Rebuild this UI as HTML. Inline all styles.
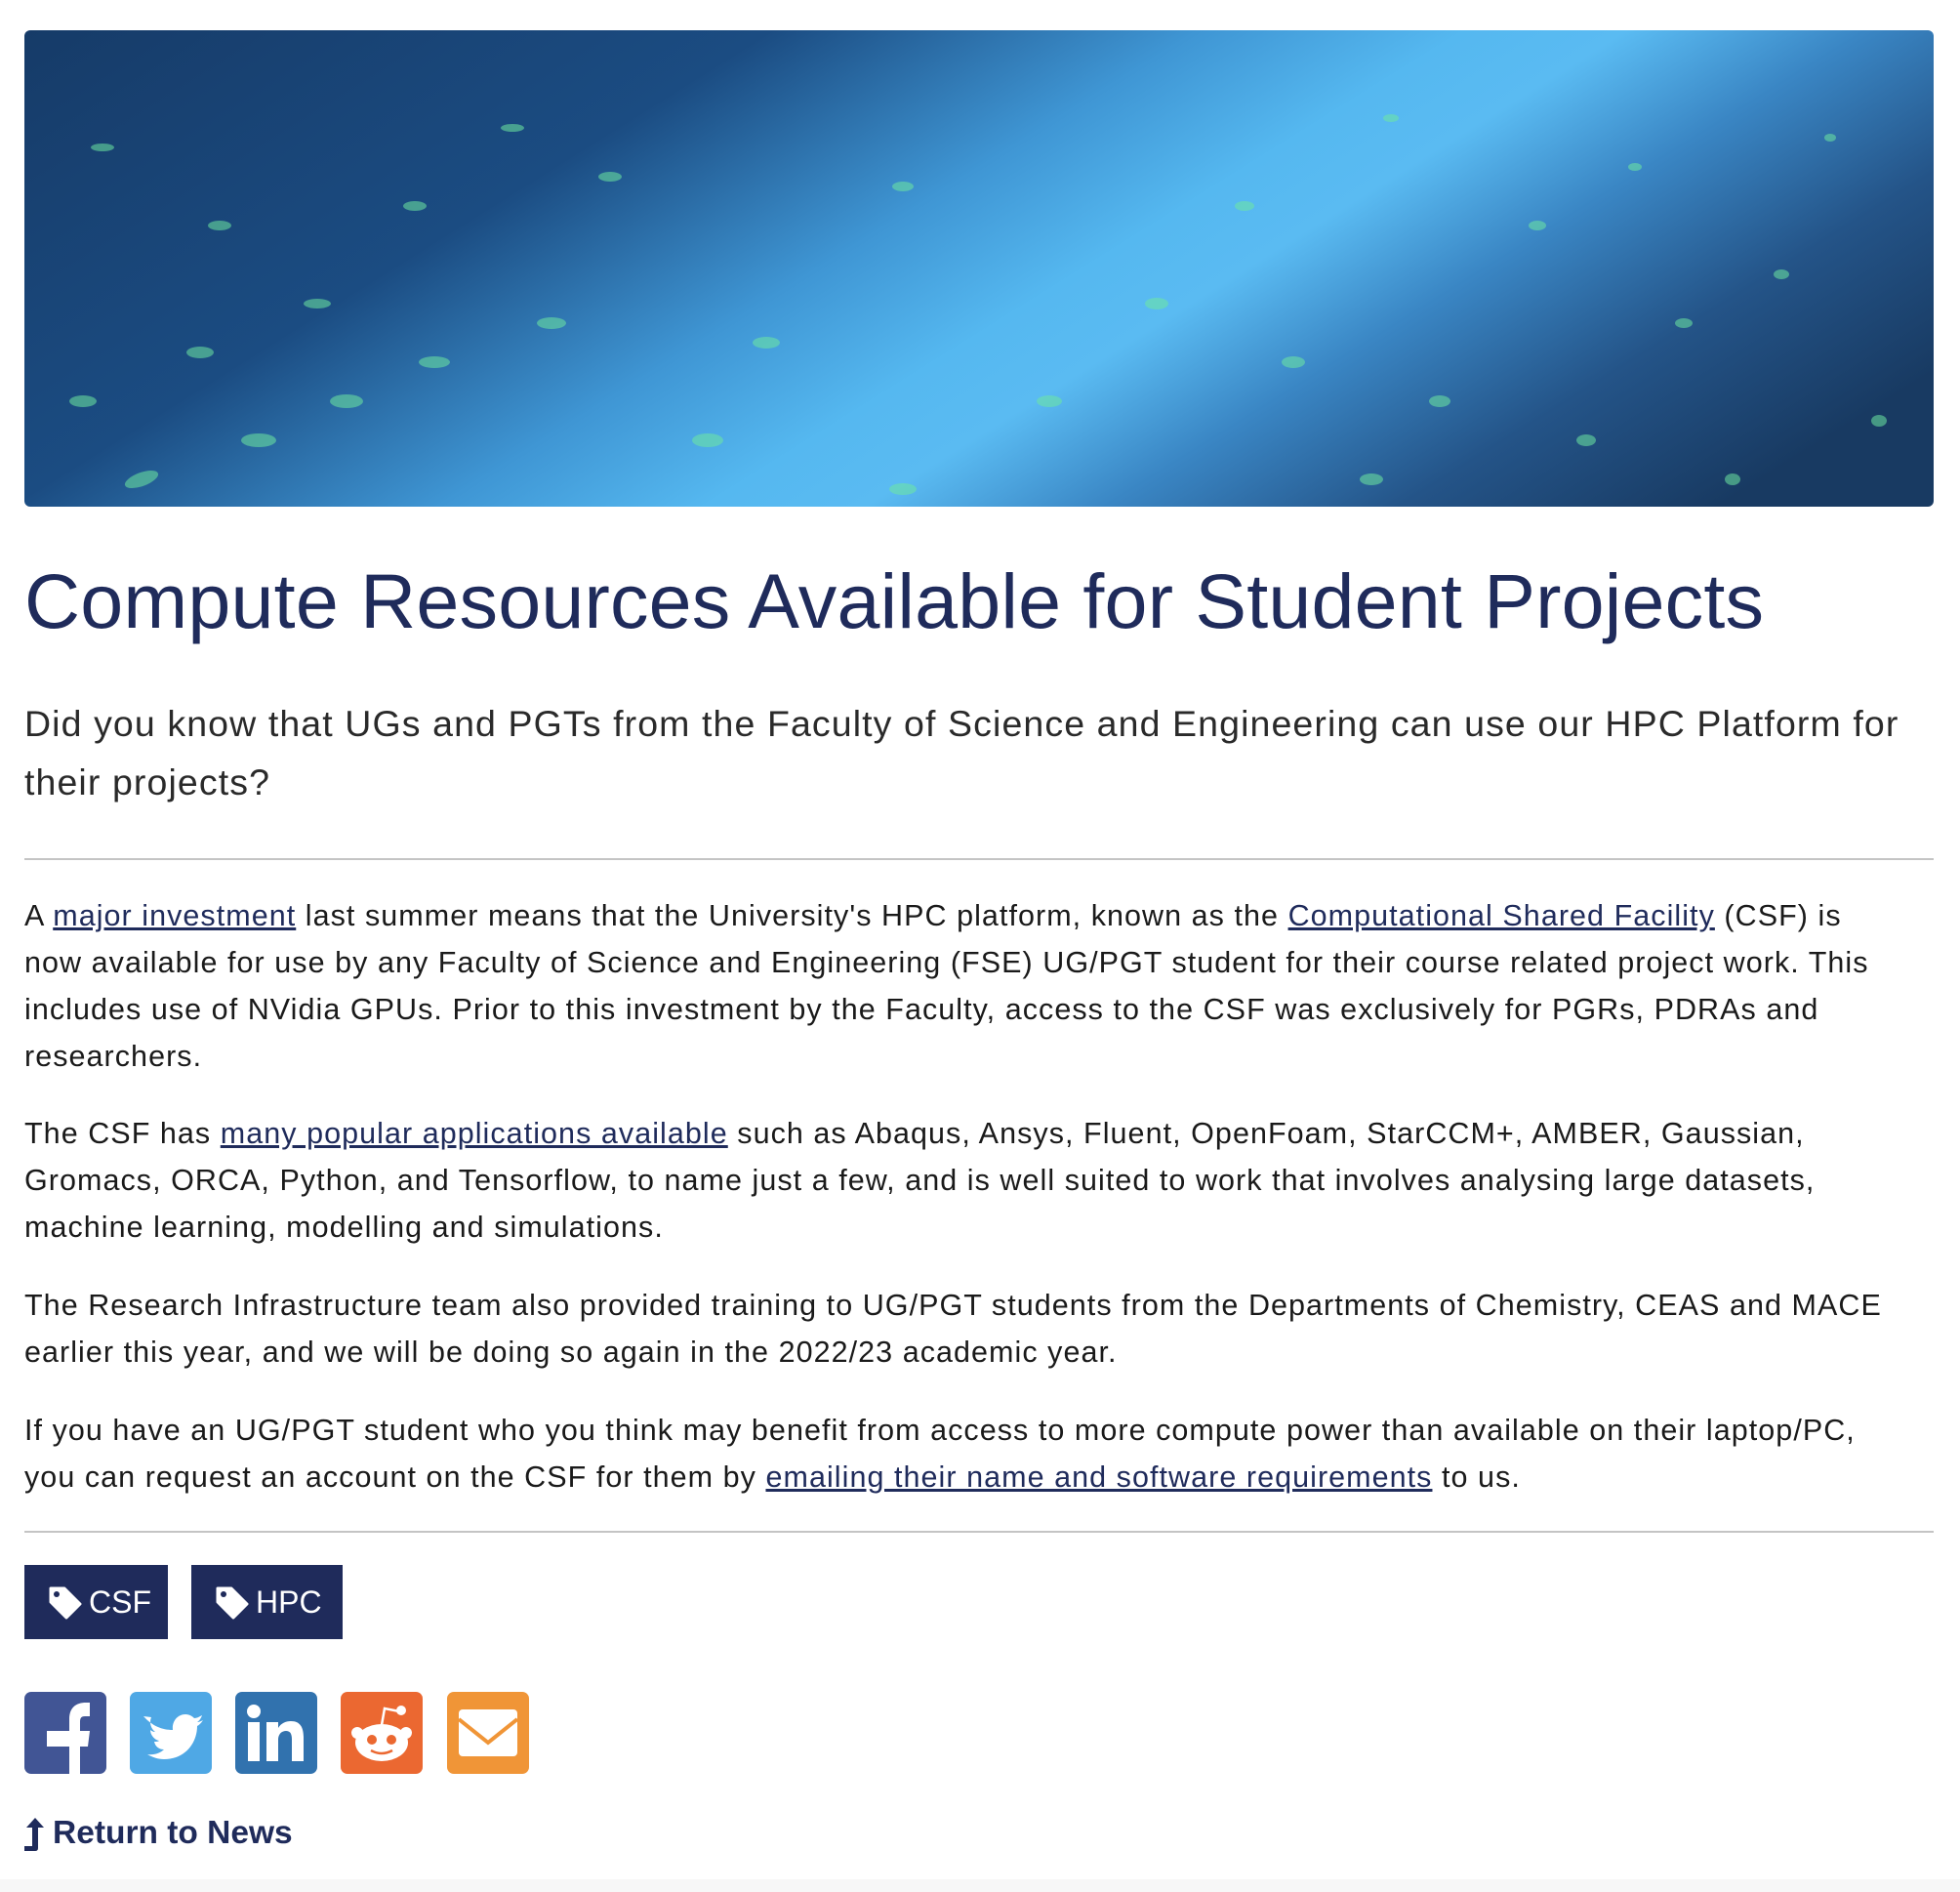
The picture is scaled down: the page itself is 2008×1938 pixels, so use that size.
<!DOCTYPE html>
<html><head><meta charset="utf-8"><style>
*{margin:0;padding:0;box-sizing:border-box}
body{width:2008px;height:1938px;background:#fff;font-family:"Liberation Sans",sans-serif;color:#1a1a1a;position:relative;overflow:hidden}
.banner{position:absolute;left:25px;top:31px;width:1956px;height:488px;border-radius:6px;overflow:hidden;
background:linear-gradient(148deg,#163b68 0%,#1b4c82 28%,#3f96d4 44%,#55b8f0 54%,#5abbf2 60%,#3a86c4 69%,#245488 80%,#183a62 92%)}
.banner svg{position:absolute;left:0;top:0}
h1{position:absolute;left:25px;top:570px;font-weight:normal;font-size:79px;color:#1f2b5b;white-space:nowrap;letter-spacing:0.2px}
.sub{position:absolute;left:25px;top:711px;font-size:37.5px;line-height:60px;color:#2a2a2a;white-space:nowrap;letter-spacing:1.1px}
.hr{position:absolute;left:25px;width:1956px;height:2px;background:#c4c4c4}
.p{position:absolute;left:25px;font-size:30.5px;line-height:48px;white-space:nowrap;letter-spacing:1.05px}
a{color:#1f2b5b;text-decoration:underline}
.tag{position:absolute;top:1603px;height:76px;background:#1f2b5b;color:#fff;font-size:32px;line-height:76px;padding-left:66px}
.tag svg{position:absolute;left:25px;top:22px}
.soc{position:absolute;top:1733px;width:84px;height:84px;border-radius:7px;overflow:hidden}
.ret{position:absolute;top:1859px;font-weight:bold;font-size:33.5px;color:#1f2b5b}
</style></head><body>
<div class="banner"><svg width="1956" height="488">
<g fill="#6ee8a0" opacity="0.55">
<ellipse cx="120" cy="460" rx="18" ry="7" transform="rotate(-20 120 460)"/><ellipse cx="240" cy="420" rx="18" ry="7"/><ellipse cx="330" cy="380" rx="17" ry="7"/><ellipse cx="420" cy="340" rx="16" ry="6"/><ellipse cx="540" cy="300" rx="15" ry="6"/><ellipse cx="180" cy="330" rx="14" ry="6"/><ellipse cx="300" cy="280" rx="14" ry="5"/><ellipse cx="700" cy="420" rx="16" ry="7"/><ellipse cx="760" cy="320" rx="14" ry="6"/><ellipse cx="1160" cy="280" rx="12" ry="6"/><ellipse cx="1300" cy="340" rx="12" ry="6"/><ellipse cx="1450" cy="380" rx="11" ry="6"/><ellipse cx="1600" cy="420" rx="10" ry="6"/><ellipse cx="1700" cy="300" rx="9" ry="5"/><ellipse cx="1800" cy="250" rx="8" ry="5"/><ellipse cx="1550" cy="200" rx="9" ry="5"/><ellipse cx="1250" cy="180" rx="10" ry="5"/><ellipse cx="900" cy="160" rx="11" ry="5"/><ellipse cx="600" cy="150" rx="12" ry="5"/><ellipse cx="400" cy="180" rx="12" ry="5"/><ellipse cx="200" cy="200" rx="12" ry="5"/><ellipse cx="1050" cy="380" rx="13" ry="6"/><ellipse cx="1380" cy="460" rx="12" ry="6"/><ellipse cx="1900" cy="400" rx="8" ry="6"/>
<ellipse cx="80" cy="120" rx="12" ry="4"/><ellipse cx="500" cy="100" rx="12" ry="4"/><ellipse cx="1400" cy="90" rx="8" ry="4"/><ellipse cx="1650" cy="140" rx="7" ry="4"/><ellipse cx="1850" cy="110" rx="6" ry="4"/><ellipse cx="1750" cy="460" rx="8" ry="6"/><ellipse cx="60" cy="380" rx="14" ry="6"/><ellipse cx="900" cy="470" rx="14" ry="6"/>
</g></svg></div>
<h1>Compute Resources Available for Student Projects</h1>
<div class="sub">Did you know that UGs and PGTs from the Faculty of Science and Engineering can use our HPC Platform for<br>their projects?</div>
<div class="hr" style="top:879px"></div>
<div class="p" style="top:914px">A <a>major investment</a> last summer means that the University's HPC platform, known as the <a>Computational Shared Facility</a> (CSF) is<br>now available for use by any Faculty of Science and Engineering (FSE) UG/PGT student for their course related project work. This<br>includes use of NVidia GPUs. Prior to this investment by the Faculty, access to the CSF was exclusively for PGRs, PDRAs and<br>researchers.</div>
<div class="p" style="top:1137px">The CSF has <a>many popular applications available</a> such as Abaqus, Ansys, Fluent, OpenFoam, StarCCM+, AMBER, Gaussian,<br>Gromacs, ORCA, Python, and Tensorflow, to name just a few, and is well suited to work that involves analysing large datasets,<br>machine learning, modelling and simulations.</div>
<div class="p" style="top:1313px">The Research Infrastructure team also provided training to UG/PGT students from the Departments of Chemistry, CEAS and MACE<br>earlier this year, and we will be doing so again in the 2022/23 academic year.</div>
<div class="p" style="top:1441px">If you have an UG/PGT student who you think may benefit from access to more compute power than available on their laptop/PC,<br>you can request an account on the CSF for them by <a>emailing their name and software requirements</a> to us.</div>
<div class="hr" style="top:1568px"></div>
<div class="tag" style="left:25px;width:147px"><svg width="34" height="34" viewBox="0 0 34 34"><path d="M2 2h14l16 16-14 14L2 16z" fill="#fff" stroke="#fff" stroke-linejoin="round" stroke-width="3"/><circle cx="8" cy="8" r="3" fill="#1f2b5b"/></svg>CSF</div>
<div class="tag" style="left:196px;width:155px"><svg width="34" height="34" viewBox="0 0 34 34"><path d="M2 2h14l16 16-14 14L2 16z" fill="#fff" stroke="#fff" stroke-linejoin="round" stroke-width="3"/><circle cx="8" cy="8" r="3" fill="#1f2b5b"/></svg>HPC</div>
<div class="soc" style="left:25px;background:#415595"><svg width="84" height="84"><path d="M46 84V56h-23V40h23V28c0-12 7-17 17-17h4v14h-5c-4 0-5 2-5 6v9h10l-2 16h-8v28z" fill="#fff"/></svg></div>
<div class="soc" style="left:133px;background:#4fa8e5"><svg width="84" height="84"><path d="M14 25c9 10 19 14 30 14-1-9 5-16 13-16 4 0 7 2 9 4 3 0 6-2 8-3-1 3-3 6-5 7 2 0 4-1 6-2-2 3-4 5-6 6 0 17-12 34-34 34-6 0-12-2-17-5 6 1 13-1 17-5-5 0-9-3-10-8 2 0 4 0 5-1-5-1-9-6-9-11 1 1 3 2 5 2-5-4-6-10-4-15z" fill="#fff"/></svg></div>
<div class="soc" style="left:241px;background:#3172ae"><svg width="84" height="84"><circle cx="19" cy="20" r="7" fill="#fff"/><rect x="13" y="31" width="12" height="40" fill="#fff"/><path d="M32 31h12v6c3-5 8-7 13-7 10 0 13 7 13 17v24H58V49c0-5-1-9-6-9s-8 4-8 9v22H32z" fill="#fff"/></svg></div>
<div class="soc" style="left:349px;background:#eb6831"><svg width="84" height="84"><ellipse cx="42" cy="52" rx="27" ry="19" fill="#fff"/><circle cx="17" cy="42" r="6" fill="#fff"/><circle cx="67" cy="42" r="6" fill="#fff"/><circle cx="62" cy="19" r="5" fill="#fff"/><path d="M42 34l3-17 15 3" stroke="#fff" stroke-width="2.5" fill="none"/><circle cx="32" cy="49" r="5" fill="#eb6831"/><circle cx="52" cy="49" r="5" fill="#eb6831"/><path d="M31 60q11 6 22 0" stroke="#eb6831" stroke-width="2.5" fill="none"/></svg></div>
<div class="soc" style="left:458px;background:#f09537"><svg width="84" height="84"><rect x="12" y="18" width="60" height="48" rx="4" fill="#fff"/><path d="M12 28l30 24 30-24" stroke="#f09537" stroke-width="4" fill="none"/></svg></div>
<svg style="position:absolute;left:25px;top:1862px" width="22" height="34" viewBox="0 0 22 34"><path d="M11 0L20 10H14V31Q14 34 11 34H0V29H8V10H2z" fill="#1f2b5b"/></svg>
<div class="ret" style="left:54px">Return to News</div>
<div style="position:absolute;left:0;top:1925px;width:2008px;height:13px;background:#f7f7f7"></div>
</body></html>
